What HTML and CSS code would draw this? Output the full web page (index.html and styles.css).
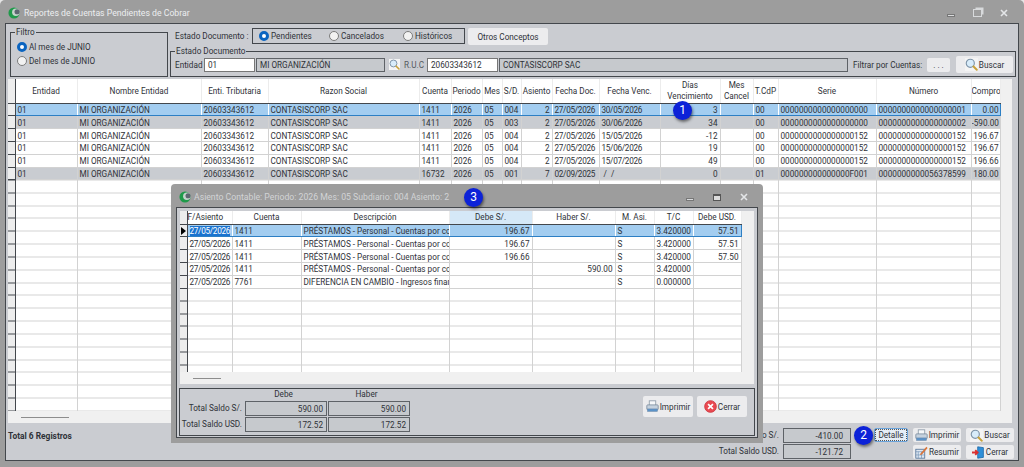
FILE: index.html
```html
<!DOCTYPE html>
<html lang="es">
<head>
  <meta charset="UTF-8">
  <title>Reportes de Cuentas Pendientes de Cobrar</title>
  <link rel="stylesheet" href="styles.css">
</head>
<body>
  <svg class="defs" width="0" height="0">
    <symbol id="logo" viewBox="0 0 14 14">
      <circle cx="7" cy="7" r="6.5" fill="#1f9a4a"/>
      <circle cx="9.2" cy="6.2" r="4.4" fill="#c4d4cc"/>
      <circle cx="10.6" cy="5.6" r="3" fill="#5c6670"/>
    </symbol>
    <symbol id="lupa" viewBox="0 0 16 16">
      <rect x="0" y="0" width="16" height="16" fill="#f4f4f4"/>
      <circle cx="6.5" cy="6.5" r="5" fill="#d8ecfa" stroke="#7d93a8" stroke-width="1.4"/>
      <path d="M10.5 10.5l4 4" stroke="#c9a23a" stroke-width="2.4" stroke-linecap="round"/>
    </symbol>
    <symbol id="printer" viewBox="0 0 16 16">
      <rect x="4" y="1" width="8" height="6" fill="#f6f8fa" stroke="#8a98a6"/>
      <rect x="1" y="6" width="14" height="6" rx="1" fill="#c6d2de" stroke="#7a8a9c"/>
      <rect x="2" y="11" width="12" height="3" fill="#5b93c9" stroke="#6a8aaa" stroke-width=".7"/>
    </symbol>
    <symbol id="cerrar" viewBox="0 0 16 16">
      <circle cx="8" cy="8" r="7.2" fill="#ea4a52" stroke="#c9343c"/>
      <path d="M5 5l6 6M11 5l-6 6" stroke="#fff" stroke-width="2"/>
    </symbol>
    <symbol id="resumir" viewBox="0 0 16 16">
      <rect x="1" y="4" width="11" height="11" fill="#dfe8f2" stroke="#4f6f94"/>
      <path d="M1 7h11M4 7v8M8 7v8M1 11h11" stroke="#6f8fb4" stroke-width=".8"/>
      <path d="M7 9l7-8 1.5 1.5-7 8-2.5 1z" fill="#d9743a"/>
    </symbol>
    <symbol id="salir" viewBox="0 0 16 16">
      <path d="M7 1l7 1v12l-7 1z" fill="#2f8fd8" stroke="#1e6aa8"/>
      <path d="M0 8h6M4 5l3 3-3 3" stroke="#d92f2f" stroke-width="2.2" fill="none"/>
    </symbol>
    <symbol id="cruz" viewBox="0 0 8 8">
      <path d="M1 1l6 6M7 1l-6 6" stroke="#e4e6e8" stroke-width="1.6"/>
    </symbol>
  </svg>

  <div class="window">
    <header class="titlebar">
      <svg class="logo"><use href="#logo"/></svg>
      <span class="title">Reportes de Cuentas Pendientes de Cobrar</span>
      <div class="win-btns">
        <span class="win-min"></span>
        <span class="win-max"></span>
        <svg class="win-close"><use href="#cruz"/></svg>
      </div>
    </header>

    <main class="client">
      <section class="top">
        <fieldset class="filtro">
          <legend>Filtro</legend>
          <label class="radio on">Al mes de JUNIO</label>
          <label class="radio">Del mes de JUNIO</label>
        </fieldset>

        <div class="top-right">
          <div class="estado-row">
            <span class="estado-label">Estado Documento :</span>
            <div class="estado-box">
              <label class="radio on">Pendientes</label>
              <label class="radio">Cancelados</label>
              <label class="radio">Históricos</label>
            </div>
            <button class="btn otros">Otros Conceptos</button>
          </div>
          <fieldset class="estado-doc">
            <legend>Estado Documento</legend>
            <span class="w-lbl">Entidad</span>
            <span class="input w-ent">01</span>
            <span class="ro w-org">MI ORGANIZACIÓN</span>
            <svg class="ico lupa-s"><use href="#lupa"/></svg>
            <span class="muted">R.U.C</span>
            <span class="input w-ruc">20603343612</span>
            <span class="ro w-name">CONTASISCORP SAC</span>
            <span class="filtrar">Filtrar por Cuentas:</span>
            <button class="btn dots">. . .</button>
            <button class="btn buscar-top"><svg class="ico"><use href="#lupa"/></svg>Buscar</button>
          </fieldset>
        </div>
      </section>

      <section class="grid-wrap main-grid">
        <div class="grid-body">
          <table class="grid">
            <colgroup>
              <col class="c7"><col style="width:62px"><col style="width:124px"><col style="width:67px"><col style="width:151px"><col style="width:32px"><col style="width:31px"><col style="width:20px"><col style="width:19px"><col style="width:31px"><col style="width:47px"><col style="width:61px"><col style="width:60px"><col style="width:33px"><col style="width:25px"><col style="width:98px"><col style="width:95px"><col style="width:29px">
            </colgroup>
            <thead>
              <tr>
                <th class="ind"></th><th>Entidad</th><th>Nombre Entidad</th><th>Enti. Tributaria</th><th>Razon Social</th><th>Cuenta</th><th>Periodo</th><th>Mes</th><th>S/D.</th><th>Asiento</th><th>Fecha Doc.</th><th>Fecha Venc.</th><th>Días<br>Vencimiento</th><th>Mes<br>Cancel</th><th>T.CdP</th><th>Serie</th><th>Número</th><th>Compro</th>
              </tr>
            </thead>
            <tbody>
              <tr class="sel"><td class="ind"></td><td>01</td><td>MI ORGANIZACIÓN</td><td>20603343612</td><td>CONTASISCORP SAC</td><td>1411</td><td>2026</td><td>05</td><td>004</td><td class="r">2</td><td class="fecha">27/05/2026</td><td class="fecha">30/05/2026</td><td class="r">3</td><td></td><td>00</td><td>0000000000000000000</td><td>0000000000000000001</td><td class="r comp">0.00</td></tr>
              <tr class="gris"><td class="ind"></td><td>01</td><td>MI ORGANIZACIÓN</td><td>20603343612</td><td>CONTASISCORP SAC</td><td>1411</td><td>2026</td><td>05</td><td>003</td><td class="r">2</td><td class="fecha">27/05/2026</td><td class="fecha">30/06/2026</td><td class="r">34</td><td></td><td>00</td><td>0000000000000000000</td><td>0000000000000000002</td><td class="r comp">-590.00</td></tr>
              <tr><td class="ind"></td><td>01</td><td>MI ORGANIZACIÓN</td><td>20603343612</td><td>CONTASISCORP SAC</td><td>1411</td><td>2026</td><td>05</td><td>004</td><td class="r">2</td><td class="fecha">27/05/2026</td><td class="fecha">15/05/2026</td><td class="r">-12</td><td></td><td>00</td><td>0000000000000000152</td><td>0000000000000000152</td><td class="r comp">196.67</td></tr>
              <tr><td class="ind"></td><td>01</td><td>MI ORGANIZACIÓN</td><td>20603343612</td><td>CONTASISCORP SAC</td><td>1411</td><td>2026</td><td>05</td><td>004</td><td class="r">2</td><td class="fecha">27/05/2026</td><td class="fecha">15/06/2026</td><td class="r">19</td><td></td><td>00</td><td>0000000000000000152</td><td>0000000000000000152</td><td class="r comp">196.67</td></tr>
              <tr><td class="ind"></td><td>01</td><td>MI ORGANIZACIÓN</td><td>20603343612</td><td>CONTASISCORP SAC</td><td>1411</td><td>2026</td><td>05</td><td>004</td><td class="r">2</td><td class="fecha">27/05/2026</td><td class="fecha">15/07/2026</td><td class="r">49</td><td></td><td>00</td><td>0000000000000000152</td><td>0000000000000000152</td><td class="r comp">196.66</td></tr>
              <tr class="gris"><td class="ind"></td><td>01</td><td>MI ORGANIZACIÓN</td><td>20603343612</td><td>CONTASISCORP SAC</td><td>16732</td><td>2026</td><td>05</td><td>001</td><td class="r">7</td><td class="fecha">02/09/2025</td><td>&nbsp;/&nbsp;&nbsp;/</td><td class="r">0</td><td></td><td>01</td><td>000000000000000F001</td><td>0000000000056378599</td><td class="r comp">180.00</td></tr>
              <tr class="filler main-filler"><td class="ind"></td><td></td><td></td><td></td><td></td><td></td><td></td><td></td><td></td><td></td><td></td><td></td><td></td><td></td><td></td><td></td><td></td><td></td></tr>
            </tbody>
          </table>
          <div class="vscroll"></div>
        </div>
        <div class="hscroll"><span class="thumb main-thumb"></span></div>
      </section>

      <footer class="bottom">
        <strong class="total-reg">Total 6 Registros</strong>
        <div class="saldos">
          <span class="lbl">Total Saldo S/.</span><span class="ro num">-410.00</span>
          <span class="lbl">Total Saldo USD.</span><span class="ro num">-121.72</span>
        </div>
        <div class="acciones">
          <button class="btn detalle">Detalle</button>
          <button class="btn"><svg class="ico"><use href="#printer"/></svg>Imprimir</button>
          <button class="btn"><svg class="ico"><use href="#lupa"/></svg>Buscar</button>
          <span></span>
          <button class="btn"><svg class="ico"><use href="#resumir"/></svg>Resumir</button>
          <button class="btn"><svg class="ico"><use href="#salir"/></svg>Cerrar</button>
        </div>
      </footer>
    </main>

    <!-- Ventana de detalle -->
    <div class="dialog">
      <header class="dlg-title">
        <svg class="logo"><use href="#logo"/></svg>
        <span class="title">Asiento Contable: Periodo: 2026 Mes: 05 Subdiario: 004 Asiento: 2</span>
        <div class="win-btns dlg-btns">
          <span class="win-min"></span>
          <span class="win-box"></span>
          <svg class="win-close"><use href="#cruz"/></svg>
        </div>
      </header>
      <div class="dlg-client">
        <section class="grid-wrap dlg-grid">
          <div class="grid-body">
            <table class="grid">
              <colgroup>
                <col class="c7"><col style="width:45px"><col style="width:69px"><col style="width:148px"><col style="width:83px"><col style="width:83px"><col style="width:39px"><col style="width:39px"><col style="width:48px">
              </colgroup>
              <thead>
                <tr><th class="ind"></th><th class="l">F/Asiento</th><th>Cuenta</th><th>Descripción</th><th class="sorted">Debe S/.</th><th>Haber S/.</th><th>M. Asi.</th><th>T/C</th><th>Debe USD.</th></tr>
              </thead>
              <tbody>
                <tr class="sel"><td class="ind cur"></td><td class="fecha fecha-sel"><span>27/05/2026</span></td><td>1411</td><td>PRÉSTAMOS - Personal - Cuentas por cobrar</td><td class="r">196.67</td><td></td><td>S</td><td class="r">3.420000</td><td class="r">57.51</td></tr>
                <tr><td class="ind"></td><td class="fecha">27/05/2026</td><td>1411</td><td>PRÉSTAMOS - Personal - Cuentas por cobrar</td><td class="r">196.67</td><td></td><td>S</td><td class="r">3.420000</td><td class="r">57.51</td></tr>
                <tr><td class="ind"></td><td class="fecha">27/05/2026</td><td>1411</td><td>PRÉSTAMOS - Personal - Cuentas por cobrar</td><td class="r">196.66</td><td></td><td>S</td><td class="r">3.420000</td><td class="r">57.50</td></tr>
                <tr><td class="ind"></td><td class="fecha">27/05/2026</td><td>1411</td><td>PRÉSTAMOS - Personal - Cuentas por cobrar</td><td></td><td class="r">590.00</td><td>S</td><td class="r">3.420000</td><td></td></tr>
                <tr><td class="ind"></td><td class="fecha">27/05/2026</td><td>7761</td><td>DIFERENCIA EN CAMBIO - Ingresos financieros</td><td></td><td></td><td>S</td><td class="r">0.000000</td><td></td></tr>
                <tr class="filler dlg-filler"><td class="ind"></td><td></td><td></td><td></td><td></td><td></td><td></td><td></td><td></td></tr>
              </tbody>
            </table>
            <div class="vscroll"></div>
          </div>
          <div class="hscroll"><span class="thumb dlg-thumb"></span></div>
        </section>
        <section class="dlg-foot">
          <div class="totales">
            <span></span><span class="tot-head">Debe</span><span class="tot-head">Haber</span>
            <span class="lbl">Total Saldo S/.</span><span class="ro num">590.00</span><span class="ro num">590.00</span>
            <span class="lbl">Total Saldo USD.</span><span class="ro num">172.52</span><span class="ro num">172.52</span>
          </div>
          <div class="dlg-actions">
            <button class="btn"><svg class="ico"><use href="#printer"/></svg>Imprimir</button>
            <button class="btn"><svg class="ico"><use href="#cerrar"/></svg>Cerrar</button>
          </div>
        </section>
      </div>
    </div>

    <span class="badge b1">1</span>
    <span class="badge b2">2</span>
    <span class="badge b3">3</span>
  </div>
</body>
</html>
```

FILE: styles.css
```css
:root {
  --panel: #caccd1;
  --frame: #9d9d9d;
  --line: #d2d2d2;
  --dark: #43474c;
  --text: #2f3238;
}

*, *::before, *::after {
  margin: 0;
  padding: 0;
  box-sizing: border-box;
}

body {
  width: 1024px;
  height: 467px;
  overflow: hidden;
  background: #e6e6e6;
  font-family: Roboto, "Liberation Sans", Arial, sans-serif;
  font-size: 8.2px;
  color: var(--text);
}

.defs {
  position: absolute;
}

.window {
  position: relative;
  height: 467px;
  background: var(--frame);
  border-radius: 5px 5px 0 0;
  padding: 0 5px 6px 5px;
  display: flex;
  flex-direction: column;
}

/* Title bars */
.titlebar {
  height: 23px;
  flex: none;
  display: flex;
  align-items: center;
  padding: 3px 0 0 3px;
  gap: 4px;
}

.logo {
  width: 12px;
  height: 12px;
  flex: none;
}

.title {
  color: #eceef0;
  font-size: 8.7px;
}

.win-btns {
  margin-left: auto;
  display: flex;
  align-items: center;
  gap: 18px;
  padding-right: 11px;
}

.win-min {
  width: 8px;
  height: 3px;
  margin-top: 5px;
  background: #d8dadc;
  border: 1px solid #777;
}

.win-max {
  width: 9px;
  height: 8px;
  border: 1.5px solid #d8dadc;
  box-shadow: 2px -2px 0 -0.5px #d8dadc;
}

.win-box {
  width: 8px;
  height: 7px;
  border: 1px solid #555;
  border-top-width: 2px;
  background: #ddd;
}

.win-close {
  width: 8px;
  height: 8px;
}

/* Main panel */
.client {
  flex: 1;
  min-height: 0;
  background: var(--panel);
  border: 1px solid var(--dark);
  padding: 4px 5px 0 2px;
  display: flex;
  flex-direction: column;
}

.top {
  display: flex;
  height: 51px;
  flex: none;
  gap: 2px;
}

fieldset {
  border: 1px solid var(--dark);
}

legend {
  margin-left: 4px;
  padding: 0 1px;
  line-height: 9px;
}

.filtro {
  width: 158px;
  height: 49px;
  margin-left: 2px;
  padding: 4px 0 0 6px;
  display: flex;
  flex-direction: column;
  gap: 2px;
}

.filtro legend {
  margin-left: -2px;
}

.radio {
  display: flex;
  align-items: center;
  gap: 2px;
  height: 12px;
  white-space: nowrap;
}

.radio::before {
  content: '';
  width: 10px;
  height: 10px;
  border: 1px solid #7c7c7c;
  border-radius: 50%;
  background: #f2f2f2;
  flex: none;
}

.radio.on::before {
  background: #fff;
  border: 3px solid #0a64c0;
}

.top-right {
  flex: 1;
  min-width: 0;
  display: flex;
  flex-direction: column;
}

.estado-row {
  display: flex;
  align-items: flex-start;
  height: 18px;
}

.estado-label {
  width: 82px;
  padding-left: 5px;
  flex: none;
  white-space: nowrap;
  line-height: 16px;
}

.estado-box {
  width: 213px;
  height: 16px;
  border: 1px solid var(--dark);
  padding-left: 6px;
  display: flex;
  align-items: center;
}

.estado-box .radio:nth-child(1) { width: 70px; }
.estado-box .radio:nth-child(2) { width: 74px; }

.btn {
  font: inherit;
  color: var(--text);
  background: #ececee;
  border: 0;
  border-radius: 2px;
  display: flex;
  align-items: center;
  justify-content: center;
  gap: 1px;
  white-space: nowrap;
}

.otros {
  width: 80px;
  height: 17px;
  margin-left: 3px;
}

.estado-doc {
  height: 30px;
  margin-top: 1px;
  padding: 0 2px 2px 4px;
  display: flex;
  align-items: center;
  gap: 1px;
}

.estado-doc legend {
  margin-left: 0;
}

.input, .ro {
  display: flex;
  align-items: center;
  height: 14px;
  padding: 0 3px;
  flex: none;
}

.input {
  background: #fff;
  border: 1px solid #777;
}

.ro {
  border: 1px solid #5e6267;
  background: #c6c9cd;
}

.w-lbl { width: 28px; }
.w-ent { width: 51px; }
.w-org { width: 129px; }
.w-ruc { width: 71px; }
.w-name { width: 349px; }

.ico {
  width: 13px;
  height: 13px;
  flex: none;
}

.lupa-s {
  width: 11px;
  height: 11px;
  margin: 0 3px;
}

.muted {
  color: #555a60;
  width: 22px;
  flex: none;
}

.filtrar {
  margin-left: 4px;
  width: 73px;
  flex: none;
  white-space: nowrap;
}

.dots {
  width: 23px;
  height: 14px;
}

.buscar-top {
  width: 57px;
  height: 17px;
  margin-left: 5px;
}

/* Grids */
.grid-wrap {
  background: #f0f0f0;
  display: flex;
  flex-direction: column;
}

.main-grid {
  height: 344px;
  flex: none;
  width: 1004px;
}

.grid-body {
  flex: 1;
  min-height: 0;
  display: flex;
  overflow: hidden;
}

.grid {
  border-collapse: collapse;
  table-layout: fixed;
  background: #fff;
  height: max-content;
}

.main-grid .grid { width: 992px; }
.dlg-grid .grid { width: 561px; }

.c7 { width: 7px; }

.grid th {
  height: 24px;
  font-weight: normal;
  text-align: center;
  line-height: 10.5px;
  border-right: 1px solid #ececec;
  border-bottom: 1px solid var(--dark);
  white-space: nowrap;
  overflow: hidden;
}

.grid th.l { text-align: left; }

.grid th.sorted { background: #d5e8f7; }

.grid td {
  height: 12.83px;
  line-height: 10px;
  padding: 1px 2px 0;
  white-space: nowrap;
  overflow: hidden;
  border-right: 1px solid var(--line);
  border-bottom: 1px solid var(--line);
}

.grid .r { text-align: right; }

.grid td.comp { padding: 1px 1px 0 0; }

.grid td.fecha { letter-spacing: -0.3px; }

.grid .ind {
  padding: 0;
  background: #ededed;
  border-right: 1px solid var(--dark);
  border-bottom: 1px solid var(--dark);
}

.grid tr.gris td { background: #c9ccd1; }
.grid tr.gris td.ind { background: #ededed; }

.grid tr.sel td {
  background: #a3cdf0;
  border-top: 1px solid #2d7fc4;
  border-bottom: 1px solid #2d7fc4;
  border-right-color: transparent;
}

.grid tr.sel td.ind {
  background: #ededed;
  border-right-color: var(--dark);
  border-top: 0;
  border-bottom-color: var(--dark);
}

.grid tr.sel td:last-child {
  border-right: 1px solid #2d7fc4;
}

.grid td.fecha-sel span {
  background: #1a73cf;
  color: #fff;
}

.grid td.cur {
  position: relative;
}

.grid td.cur::after {
  content: '';
  position: absolute;
  left: 1px;
  top: 2px;
  border-left: 5px solid #000;
  border-top: 4px solid transparent;
  border-bottom: 4px solid transparent;
}

.grid tr.filler td {
  padding: 0;
  border-bottom: 0;
  background: repeating-linear-gradient(to bottom, #fff 0, #fff 11.83px, var(--line) 11.83px, var(--line) 12.83px);
}

.grid tr.filler td.ind {
  background: repeating-linear-gradient(to bottom, #ededed 0, #ededed 11.83px, var(--dark) 11.83px, var(--dark) 12.83px);
}

.main-filler td { height: 231px !important; }
.dlg-filler td { height: 84px !important; }

.vscroll {
  flex: 1;
  background: #f0f0f0;
}

.hscroll {
  height: 12px;
  flex: none;
  background: #f0f0f0;
  display: flex;
  align-items: center;
}

.thumb {
  height: 1px;
  background: #8d8d8d;
}

.main-thumb {
  width: 48px;
  margin-left: 13px;
}

.dlg-thumb {
  width: 28px;
  margin-left: 13px;
}

/* Footer */
.bottom {
  flex: 1;
  min-height: 0;
  display: flex;
  align-items: flex-start;
}

.total-reg {
  margin-top: 8px;
  font-size: 8.4px;
}

.saldos {
  margin-left: auto;
  margin-top: 5px;
  display: grid;
  grid-template-columns: 82px 68px;
  gap: 1px 4px;
}

.lbl {
  text-align: right;
  line-height: 15px;
  white-space: nowrap;
}

.num {
  justify-content: flex-end;
  height: 15px;
  padding-right: 7px;
}

.acciones {
  margin: 5px -1px 0 23px;
  display: grid;
  grid-template-columns: 34px 48px 48px;
  grid-template-rows: 14px 14px;
  gap: 3px 5px;
}

.acciones .btn {
  height: 14px;
}

.detalle {
  outline: 1px dotted #555;
  outline-offset: -2px;
  border: 1px solid #6aa4dc !important;
  background: #e6eef6;
}

/* Dialog */
.dialog {
  position: absolute;
  left: 171px;
  top: 184px;
  width: 592px;
  height: 259px;
  background: var(--frame);
  border-radius: 4px 4px 0 0;
  display: flex;
  flex-direction: column;
}

.dlg-title {
  height: 23px;
  flex: none;
  display: flex;
  align-items: center;
  padding: 3px 0 0 8px;
  gap: 3px;
}

.dlg-title .title {
  color: #d2d4d6;
}

.dlg-btns {
  gap: 19px;
  padding-right: 15px;
}

.dlg-client {
  flex: 1;
  margin: 0 5px 5px 5px;
  min-height: 0;
  background: var(--panel);
  border: 1px solid var(--dark);
  padding: 3px 3px 0 3px;
  display: flex;
  flex-direction: column;
}

.dlg-grid {
  height: 173px;
  flex: none;
}

.dlg-grid th { height: 13px; }

.dlg-foot {
  flex: 1;
  min-height: 0;
  margin: 4px -1px 1px -1px;
  border: 1px solid var(--dark);
  display: flex;
  justify-content: space-between;
  align-items: flex-start;
}

.totales {
  display: grid;
  grid-template-columns: 64px 82px 82px;
  grid-template-rows: 11px 15px 15px;
  gap: 1px;
}

.totales .lbl {
  padding-right: 2px;
}

.tot-head {
  text-align: center;
  line-height: 11px;
  padding-right: 5px;
}

.totales .num {
  padding-right: 3px;
}

.dlg-actions {
  display: flex;
  gap: 4px;
  padding: 7px 7px 0 0;
}

.dlg-actions .btn {
  width: 50px;
  height: 21px;
}

/* Numbered callouts */
.badge {
  position: absolute;
  width: 19px;
  height: 19px;
  border-radius: 50%;
  background: #0c22d8;
  color: #fff;
  font-size: 12px;
  line-height: 19px;
  text-align: center;
  box-shadow: 1px 2px 3px rgba(0, 0, 0, 0.5);
}

.b1 { left: 673px; top: 101px; }
.b2 { left: 854px; top: 426px; }
.b3 { left: 464px; top: 188px; }
```
